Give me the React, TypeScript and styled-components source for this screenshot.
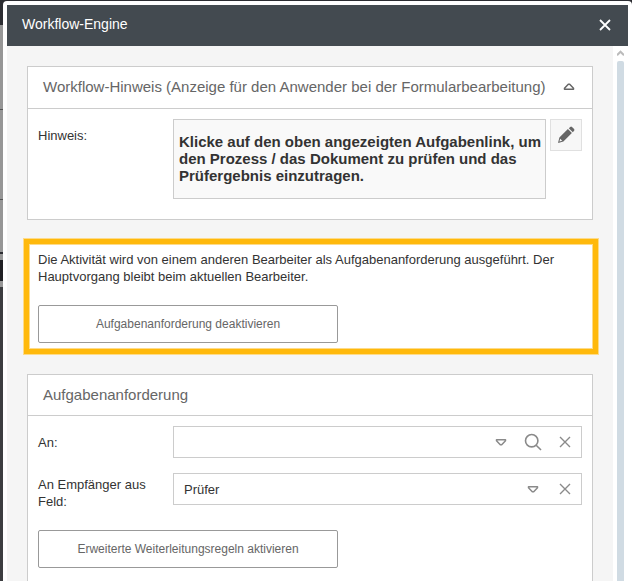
import React from "react";
import styled, { createGlobalStyle } from "styled-components";

const GlobalStyle = createGlobalStyle`
  *, *::before, *::after { box-sizing: border-box; }
  body {
    margin: 0;
    overflow: hidden;
    color: #333;
    font: 13px/17px "Liberation Sans", Arial, sans-serif;
  }
  button, input, select { font-family: inherit; }
`;

const Backdrop = styled.div`
  display: flex;
  height: 100vh;
  padding: 1px 0 0 3px;
  overflow: hidden;
  background:
    linear-gradient(#2c2d32 0 25px, #979797 25px 109px, #555 109px 110px, #979797 110px 199px,
      #555 199px 200px, #979797 200px 252px, #2c2d32 252px 254px, #979797 254px 260px,
      #1f2023 260px 281px, #979797 281px 287px, #3c3d40 287px)
      0 0 / 3px 100% no-repeat,
    #2c2d32;
`;

const Dialog = styled.section`
  display: flex;
  flex: 1;
  flex-direction: column;
  min-width: 0;
  padding: 4px 4px 0;
  border-radius: 4px 4px 0 0;
  background: #fff;
`;

const TitleBar = styled.header`
  display: flex;
  flex: none;
  align-items: center;
  justify-content: space-between;
  height: 41px;
  padding: 0 13px 2px 15px;
  background: #434a50;
  color: #fff;
`;

const DialogTitle = styled.h1`
  margin: 0;
  font-size: 14px;
  font-weight: 400;
`;

const IconButton = styled.button<{ $size?: number }>`
  display: flex;
  flex: none;
  align-items: center;
  justify-content: center;
  width: ${({ $size = 32 }) => $size}px;
  height: ${({ $size = 32 }) => $size}px;
  padding: 0;
  border: 0;
  background: none;
  color: inherit;
  cursor: pointer;
`;

const EditButton = styled(IconButton)`
  border: 1px solid #e0e0e0;
  background: #f7f7f7;
  color: #666;
`;

const Viewport = styled.div`
  display: flex;
  flex: 1;
  min-height: 0;
`;

const Content = styled.main`
  display: flex;
  flex: 1;
  flex-direction: column;
  min-width: 0;
  padding: 20px 20px 0;
  overflow: hidden;
  background: #f5f5f5;
`;

const ScrollTrack = styled.div`
  display: flex;
  flex: none;
  flex-direction: column;
  align-items: center;
  width: 15px;
  padding-top: 4px;
`;

const ScrollThumb = styled.div`
  flex: 1;
  width: 7px;
  margin-top: 4px;
  border-radius: 2px 2px 0 0;
  background: #d0dbe3;
`;

const Card = styled.section<{ $grow?: boolean }>`
  flex: ${({ $grow }) => ($grow ? "1 0 auto" : "none")};
  border: 1px solid #ccc;
  border-bottom-width: ${({ $grow }) => ($grow ? 0 : 1)}px;
  background: #fff;
`;

const CardHeader = styled.header<{ $collapsible?: boolean }>`
  display: flex;
  align-items: center;
  justify-content: space-between;
  height: ${({ $collapsible }) => ($collapsible ? 42 : 41)}px;
  padding: 0 15px 2px;
  border-bottom: 1px solid #ccc;
  color: #666;
`;

const CardTitle = styled.h2`
  margin: 0;
  font-size: 15px;
  font-weight: 400;
  white-space: nowrap;
`;

const CardBody = styled.div`
  display: flex;
  flex-direction: column;
  gap: 15px;
  padding: 10px 10px 20px;
`;

const FormRow = styled.div`
  display: grid;
  grid-template-columns: 135px minmax(0, 1fr);
  align-items: start;
`;

const Label = styled.label<{ $tall?: boolean }>`
  padding: ${({ $tall }) => ($tall ? "3px 15px 5px 0" : "8px 15px 7px 0")};
`;

const NoteGroup = styled.div`
  display: flex;
  gap: 4px;
  align-items: flex-start;
`;

const Note = styled.output`
  flex: 1;
  min-height: 80px;
  padding: 13px 0 13px 5px;
  border: 1px solid #ccc;
  background: #f9f9f9;
  font-size: 15px;
  font-weight: 700;
`;

const Highlight = styled.section`
  flex: none;
  margin: 18px -6px 19px -4px;
  padding: 12px 14px 11px;
  border: 1px solid #fddb8a;
  background: #fff;
  box-shadow: inset 0 0 0 5px #ffb90c, inset 0 0 0 6px #fddb8a;
`;

const Message = styled.p`
  margin: 0 0 20px;
`;

const OutlineButton = styled.button`
  display: block;
  width: 300px;
  max-width: 100%;
  height: 38px;
  padding: 0;
  border: 1px solid #999;
  border-radius: 2px;
  background: #fff;
  color: #666;
  font-size: 12px;
  cursor: pointer;
`;

const Field = styled.div`
  display: flex;
  align-items: center;
  height: 32px;
  border: 1px solid #ccc;
  background: #fff;
  color: #8a8a8a;
`;

const FieldInput = styled.input`
  flex: 1;
  min-width: 0;
  padding: 0 10px;
  border: 0;
  outline: 0;
  background: none;
  color: #333;
  font-size: 13px;
`;

const CrossIcon = ({ width = 1.4 }: { width?: number }) => (
  <svg width="12" height="12" viewBox="0 0 12 12" fill="none" stroke="currentColor" strokeWidth={width} aria-hidden="true">
    <path d="M1 1l10 10M11 1L1 11" />
  </svg>
);

const TriangleIcon = ({ up = false }: { up?: boolean }) => (
  <svg width="12" height="8" viewBox="0 0 12 8" fill="none" stroke="currentColor" strokeWidth="1.5" strokeLinejoin="round" aria-hidden="true">
    <path d={up ? "M1.5 6.2V5.2L5.3 1.3H6.7L10.5 5.2V6.2Z" : "M1.5 1.8V2.8L5.3 6.7H6.7L10.5 2.8V1.8Z"} />
  </svg>
);

const SearchIcon = () => (
  <svg width="18" height="18" viewBox="0 0 18 18" fill="none" stroke="currentColor" strokeWidth="1.6" aria-hidden="true">
    <circle cx="7.7" cy="7.7" r="6.2" />
    <path d="M12.2 12.2L17 17" />
  </svg>
);

const PencilIcon = () => (
  <svg width="18" height="18" viewBox="0 0 18 18" aria-hidden="true">
    <path fill="currentColor" d="M1 17L2.4 11.6L10.9 3.1L14.9 7.1L6.4 15.6ZM11.8 2.2L13.2.9Q14.1.2 15 .9L17.1 3Q17.8 3.9 17.1 4.8L15.8 6.2Z" />
    <path fill="#f7f7f7" d="M2.4 15.6L3.2 12.8L5.2 14.8Z" />
  </svg>
);

const ScrollUpIcon = () => (
  <svg width="7" height="7" viewBox="0 0 7 7" fill="none" stroke="#bbb" strokeWidth="2" aria-hidden="true">
    <path d="M0 5.2L3.5 1.7L7 5.2" />
  </svg>
);

export default function App() {
  return (
    <>
      <GlobalStyle />
      <Backdrop>
        <Dialog role="dialog" aria-labelledby="dialog-title">
          <TitleBar>
            <DialogTitle id="dialog-title">Workflow-Engine</DialogTitle>
            <IconButton $size={20} type="button" aria-label="Schließen">
              <CrossIcon width={1.8} />
            </IconButton>
          </TitleBar>
          <Viewport>
            <Content>
              <Card>
                <CardHeader $collapsible>
                  <CardTitle>Workflow-Hinweis (Anzeige für den Anwender bei der Formularbearbeitung)</CardTitle>
                  <IconButton $size={16} type="button" aria-label="Einklappen">
                    <TriangleIcon up />
                  </IconButton>
                </CardHeader>
                <CardBody>
                  <FormRow>
                    <Label htmlFor="note">Hinweis:</Label>
                    <NoteGroup>
                      <Note id="note">
                        Klicke auf den oben angezeigten Aufgabenlink, um den Prozess / das Dokument zu prüfen und das
                        Prüfergebnis einzutragen.
                      </Note>
                      <EditButton type="button" aria-label="Bearbeiten">
                        <PencilIcon />
                      </EditButton>
                    </NoteGroup>
                  </FormRow>
                </CardBody>
              </Card>

              <Highlight>
                <Message>
                  Die Aktivität wird von einem anderen Bearbeiter als Aufgabenanforderung ausgeführt. Der Hauptvorgang
                  bleibt beim aktuellen Bearbeiter.
                </Message>
                <OutlineButton type="button">Aufgabenanforderung deaktivieren</OutlineButton>
              </Highlight>

              <Card $grow>
                <CardHeader>
                  <CardTitle>Aufgabenanforderung</CardTitle>
                </CardHeader>
                <CardBody>
                  <FormRow>
                    <Label htmlFor="recipient">An:</Label>
                    <Field>
                      <FieldInput id="recipient" type="text" />
                      <IconButton type="button" aria-label="Auswahl öffnen"><TriangleIcon /></IconButton>
                      <IconButton type="button" aria-label="Suchen"><SearchIcon /></IconButton>
                      <IconButton type="button" aria-label="Leeren"><CrossIcon /></IconButton>
                    </Field>
                  </FormRow>
                  <FormRow>
                    <Label htmlFor="recipient-field" $tall>An Empfänger aus Feld:</Label>
                    <Field>
                      <FieldInput id="recipient-field" type="text" defaultValue="Prüfer" />
                      <IconButton type="button" aria-label="Feldauswahl öffnen"><TriangleIcon /></IconButton>
                      <IconButton type="button" aria-label="Feld leeren"><CrossIcon /></IconButton>
                    </Field>
                  </FormRow>
                  <OutlineButton type="button">Erweiterte Weiterleitungsregeln aktivieren</OutlineButton>
                </CardBody>
              </Card>
            </Content>
            <ScrollTrack aria-hidden="true">
              <ScrollUpIcon />
              <ScrollThumb />
            </ScrollTrack>
          </Viewport>
        </Dialog>
      </Backdrop>
    </>
  );
}
